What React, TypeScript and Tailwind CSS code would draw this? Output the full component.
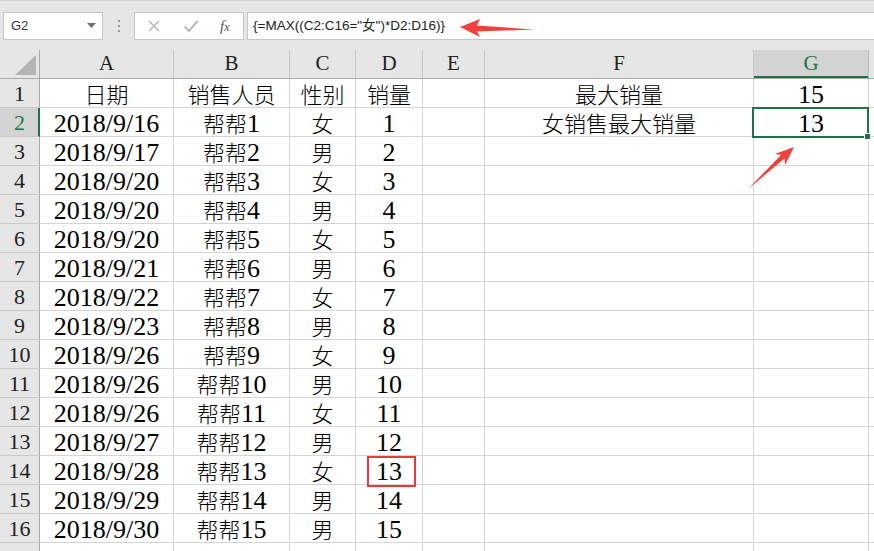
import React from "react"

const rows: string[][] = [
  ["日期", "销售人员", "性别", "销量", "", "最大销量", "15"],
  ["2018/9/16", "帮帮1", "女", "1", "", "女销售最大销量", "13"],
  ["2018/9/17", "帮帮2", "男", "2"],
  ["2018/9/20", "帮帮3", "女", "3"],
  ["2018/9/20", "帮帮4", "男", "4"],
  ["2018/9/20", "帮帮5", "女", "5"],
  ["2018/9/21", "帮帮6", "男", "6"],
  ["2018/9/22", "帮帮7", "女", "7"],
  ["2018/9/23", "帮帮8", "男", "8"],
  ["2018/9/26", "帮帮9", "女", "9"],
  ["2018/9/26", "帮帮10", "男", "10"],
  ["2018/9/26", "帮帮11", "女", "11"],
  ["2018/9/27", "帮帮12", "男", "12"],
  ["2018/9/28", "帮帮13", "女", "13"],
  ["2018/9/29", "帮帮14", "男", "14"],
  ["2018/9/30", "帮帮15", "男", "15"],
  [],
]

const cols = [
  { name: "A", w: "w-[134px]" },
  { name: "B", w: "w-[116px]" },
  { name: "C", w: "w-[66px]" },
  { name: "D", w: "w-[67px]" },
  { name: "E", w: "w-[62px]" },
  { name: "F", w: "w-[269px]" },
  { name: "G", w: "w-[115px]" },
]

// split CJK and latin runs so each gets its own font size
function CellText({ text }: { text: string }) {
  const runs = text.match(/[\u4e00-\u9fff]+|[^\u4e00-\u9fff]+/g) || []
  return (
    <>
      {runs.map((r, i) =>
        /[\u4e00-\u9fff]/.test(r) ? (
          <span key={i} className="font-['Noto_Sans_CJK_SC',sans-serif] text-[22px] font-light">
            {r}
          </span>
        ) : (
          <span key={i} className="relative top-[2px] font-['Liberation_Serif',serif] text-[26px] leading-none">
            {r}
          </span>
        )
      )}
    </>
  )
}

function TopBar() {
  return (
    <div className="h-[50px] border-t border-[#d4d4d4] flex items-start pt-[11px] font-['Liberation_Sans','Noto_Sans_CJK_SC',sans-serif]">
      <div className="ml-[3px] w-[100px] h-[28px] bg-white border border-[#c6c6c6] flex items-center pl-[7px] pr-[6px] text-[13px] text-[#333]">
        <span className="flex-1">G2</span>
        <svg width="9" height="6" viewBox="0 0 9 6">
          <path d="M0 0 L9 0 L4.5 5 Z" fill="#6e6e6e" />
        </svg>
      </div>
      <div className="w-[31px] h-[28px] flex flex-col items-center justify-center gap-[3px]">
        <div className="w-[2px] h-[2px] bg-[#9a9a9a]" />
        <div className="w-[2px] h-[2px] bg-[#9a9a9a]" />
        <div className="w-[2px] h-[2px] bg-[#9a9a9a]" />
      </div>
      <div className="w-[110px] h-[28px] bg-white border border-[#c6c6c6] flex items-center">
        <svg className="ml-[12px]" width="14" height="14" viewBox="0 0 14 14">
          <path d="M2 2 L12 12 M12 2 L2 12" stroke="#b9b9b9" strokeWidth="1.6" />
        </svg>
        <svg className="ml-[22px]" width="16" height="14" viewBox="0 0 16 14">
          <path d="M1.5 7.5 L6 12 L14.5 2" stroke="#b9b9b9" strokeWidth="2" fill="none" />
        </svg>
        <span className="ml-[21px] font-['Liberation_Serif',serif] italic text-[15px] text-[#555]">
          f<span className="text-[12px]">x</span>
        </span>
      </div>
      <div className="ml-[3px] flex-1 h-[28px] bg-white border border-[#c6c6c6] border-r-0 flex items-center pl-[5px] text-[13.5px] text-[#222]">
        {'{=MAX((C2:C16="女")*D2:D16)}'}
      </div>
    </div>
  )
}

function HeaderRow() {
  return (
    <div className="flex h-[29px] border-b border-[#ababab]">
      <div className="w-[40px] shrink-0 border-r border-[#ababab] relative">
        <svg className="absolute left-0 top-0" width="40" height="28" viewBox="0 0 40 28">
          <path d="M15 25 L36 25 L36 5 Z" fill="#b5b5b5" />
        </svg>
      </div>
      {cols.map((c) => (
        <div
          key={c.name}
          className={`${c.w} shrink-0 flex items-center justify-center font-['Liberation_Serif',serif] text-[21px] ${
            c.name === "G"
              ? "bg-[#d3d3d3] text-[#217346] border-r border-[#bcbcbc] shadow-[inset_0_-2px_0_#217346]"
              : "text-[#222] border-r border-[#c9c9c9]"
          }`}
        >
          {c.name}
        </div>
      ))}
      <div className="flex-1" />
    </div>
  )
}

function DataRow({ n, cells }: { n: number; cells: string[] }) {
  const sel = n === 2
  return (
    <div className="flex h-[29px] shrink-0">
      <div
        className={`w-[40px] shrink-0 flex items-center justify-center font-['Liberation_Serif',serif] text-[22px] border-b border-[#c9c9c9] ${
          sel
            ? "bg-[#d3d3d3] text-[#217346] border-r-2 border-r-[#217346]"
            : "bg-[#e6e6e6] text-[#222] border-r border-r-[#ababab]"
        }`}
      >
        <span className={sel ? "-mr-[1px]" : ""}>{n <= 16 ? n : ""}</span>
      </div>
      {cols.map((c, i) => (
        <div
          key={c.name}
          className={`${c.w} shrink-0 relative flex items-center justify-center bg-white border-r border-b border-[#d4d4d4] text-black whitespace-nowrap`}
        >
          <CellText text={cells[i] || ""} />
          {n === 2 && c.name === "G" && (
            <div className="absolute z-10 -left-[2px] -top-[1px] w-[117px] h-[31px] border-2 border-[#217346]">
              <div className="absolute -right-[4px] -bottom-[4px] w-[7px] h-[7px] bg-[#217346] border border-white" />
            </div>
          )}
          {n === 14 && c.name === "D" && (
            <div className="absolute z-10 left-[11px] top-0 w-[49px] h-[31px] border-2 border-[#e83a3a]" />
          )}
        </div>
      ))}
      <div className="flex-1 bg-white border-b border-[#d4d4d4]" />
    </div>
  )
}

export default function App() {
  return (
    <div className="relative w-[874px] h-[551px] overflow-hidden bg-[#e6e6e6]">
      <TopBar />
      <HeaderRow />
      <div className="flex flex-col">
        {rows.map((r, i) => (
          <DataRow key={i} n={i + 1} cells={r} />
        ))}
      </div>

      {/* red annotation arrows */}
      <svg className="absolute z-20 left-0 top-0 pointer-events-none" width="874" height="551" viewBox="0 0 874 551">
        <polygon points="460,27 480,19 477,25.5 534,29.5 477,31.5 480,37" fill="#f0413c" />
        <polygon points="794,147 775,154 781,155 748,189 784.5,158.5 785,165" fill="#f0413c" />
      </svg>
    </div>
  )
}
